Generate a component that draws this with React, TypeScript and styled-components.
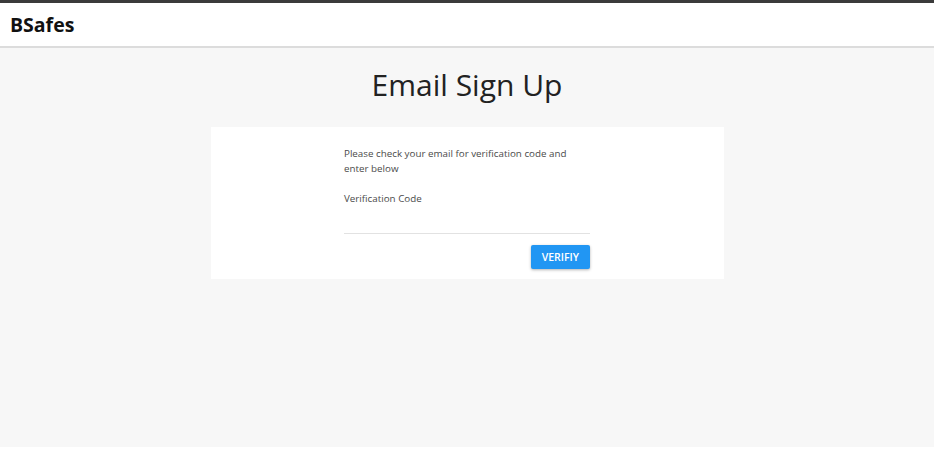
import * as React from 'react'
import styled, { createGlobalStyle } from 'styled-components'

const GlobalStyle = createGlobalStyle`
  html, body {
    margin: 0;
    padding: 0;
    background: #ffffff;
  }
  body {
    font-family: 'Open Sans', 'Noto Sans', sans-serif;
  }
`

const Page = styled.div`
  width: 934px;
  height: 447px;
  display: flex;
  flex-direction: column;
  border-top: 3px solid #3b3b3b;
  box-sizing: border-box;
`

const NavBar = styled.header`
  height: 43px;
  display: flex;
  align-items: center;
  padding: 0 10px;
  background: #ffffff;
  border-bottom: 2px solid #dcdcdc;
`

const Brand = styled.div`
  font-size: 19.5px;
  font-weight: 700;
  color: #111111;
`

const Main = styled.main`
  flex: 1;
  background: #f7f7f7;
  display: flex;
  flex-direction: column;
  align-items: center;
`

const Title = styled.h1`
  margin: 17px 0 0;
  font-size: 30px;
  font-weight: 400;
  line-height: 40px;
  color: #222222;
`

const Card = styled.section`
  margin-top: 22px;
  width: 513px;
  height: 152px;
  background: #ffffff;
  display: flex;
  justify-content: center;
  box-sizing: border-box;
  padding-top: 19px;
`

const Form = styled.div`
  width: 246px;
  display: flex;
  flex-direction: column;
`

const Note = styled.p`
  margin: 0;
  font-size: 9.8px;
  line-height: 15px;
  color: #4a4a4a;
`

const Label = styled.label`
  margin-top: 15px;
  font-size: 9.8px;
  line-height: 15px;
  color: #4a4a4a;
`

const CodeInput = styled.input`
  margin-top: 7px;
  height: 20px;
  border: none;
  border-bottom: 1px solid #e2e2e2;
  outline: none;
  background: transparent;
  padding: 0;
`

const Actions = styled.div`
  display: flex;
  justify-content: flex-end;
  margin-top: 11px;
`

const Button = styled.button`
  height: 24px;
  padding: 0 11px;
  border: none;
  border-radius: 2px;
  background: #2196f3;
  color: #ffffff;
  font-family: 'Open Sans', sans-serif;
  font-size: 10.5px;
  font-weight: 600;
  text-transform: uppercase;
  box-shadow: 0 1px 3px rgba(0, 0, 0, 0.3);
  cursor: pointer;
`

export default function App() {
  const [code, setCode] = React.useState('')
  return (
    <>
      <GlobalStyle />
      <Page>
        <NavBar>
          <Brand>BSafes</Brand>
        </NavBar>
        <Main>
          <Title>Email Sign Up</Title>
          <Card>
            <Form>
              <Note>Please check your email for verification code and enter below</Note>
              <Label htmlFor="code">Verification Code</Label>
              <CodeInput id="code" value={code} onChange={(e) => setCode(e.target.value)} />
              <Actions>
                <Button>Verifiy</Button>
              </Actions>
            </Form>
          </Card>
        </Main>
      </Page>
    </>
  )
}
